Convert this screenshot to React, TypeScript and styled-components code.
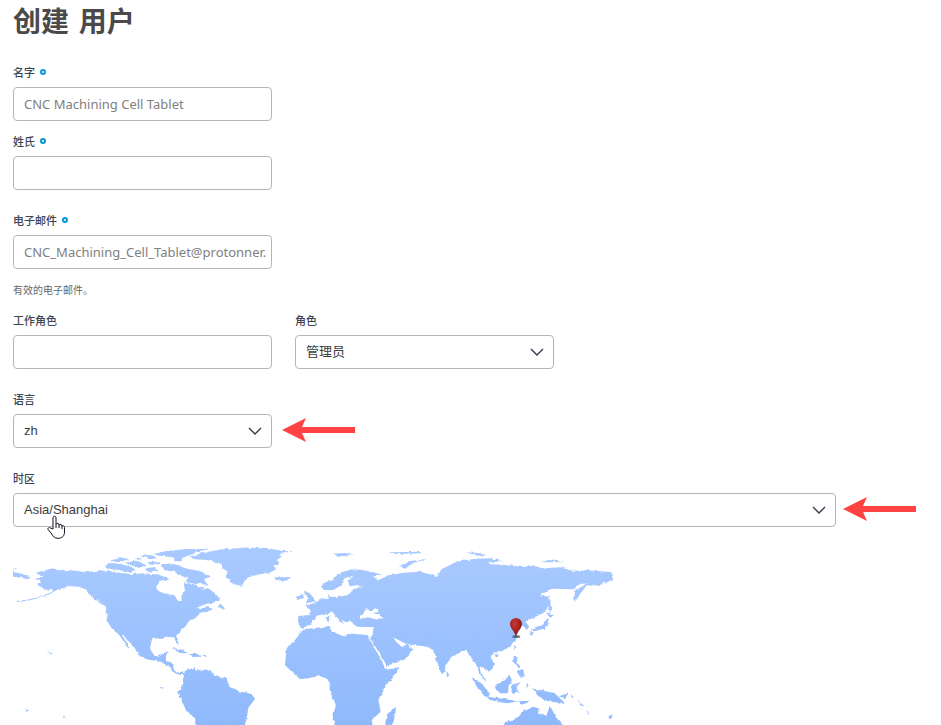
import React from "react";
import styled, { createGlobalStyle, css } from "styled-components";

const GlobalStyle = createGlobalStyle`
  *, *::before, *::after { box-sizing: border-box; }
  body {
    margin: 0;
    background: #fff;
    color: #3c3c3c;
    font-family: "Liberation Sans", "Noto Sans CJK SC", sans-serif;
  }
`;

const Page = styled.form`
  padding: 5px 25px 0 13px;
`;

const Title = styled.h1`
  margin: 0 0 22px;
  font: 700 28px/36px "DejaVu Sans", "Noto Sans CJK SC", sans-serif;
  color: #4a4a4a;
`;

const Row = styled.div<{ $gap?: number }>`
  display: flex;
  flex-wrap: wrap;
  gap: 23px;
  margin-bottom: ${(p) => p.$gap ?? 21}px;
`;

const Field = styled.div<{ $wide?: boolean }>`
  display: flex;
  flex-direction: column;
  gap: 6px;
  width: ${(p) => (p.$wide ? "100%" : "259px")};
  max-width: 100%;
`;

const Label = styled.label`
  display: flex;
  align-items: center;
  gap: 5px;
  font: 500 11px/18px "Noto Sans CJK SC", sans-serif;
  color: #3c4452;
`;

const Required = styled.span`
  width: 6px;
  height: 6px;
  border: 2px solid #0696d7;
  border-radius: 50%;
`;

const control = css`
  width: 100%;
  height: 34px;
  padding: 0 0 0 10px;
  border: 1px solid #b4b4be;
  border-radius: 4px;
  background: #fff;
  outline: none;
`;

const Input = styled.input`
  ${control}
  font: 400 13px/18px "Noto Sans", "Noto Sans CJK SC", sans-serif;
  color: #808080;
`;

const SelectBox = styled.div`
  display: grid;
  flex: 1;
  min-width: 0;
  align-items: center;

  > * { grid-area: 1 / 1; }
`;

const Select = styled.select`
  ${control}
  appearance: none;
  font: 13px/18px "Liberation Sans", "Noto Sans CJK SC", sans-serif;
  color: #3c3c3c;
  cursor: pointer;
`;

const Chevron = styled.svg`
  justify-self: end;
  width: 14px;
  height: 8px;
  margin-right: 10px;
  pointer-events: none;
`;

const Hint = styled.p`
  margin: 0 0 12px;
  font: 400 10px/18px "Noto Sans CJK SC", sans-serif;
  color: #666;
`;

const Pointed = styled.div`
  position: relative;
  display: flex;
  align-items: center;
  gap: 8px;
`;

const ArrowSlot = styled.svg<{ $outside?: boolean }>`
  flex: none;
  width: 72px;
  height: 24px;
  overflow: visible;
  ${(p) =>
    p.$outside &&
    css`
      position: absolute;
      left: 100%;
      margin-left: 11px;
    `}
`;

const Cursor = styled.svg`
  position: absolute;
  left: 34px;
  top: 22px;
  width: 18px;
  height: 24px;
  pointer-events: none;
`;

const Map = styled.svg`
  display: block;
  width: 600px;
  max-width: 100%;
  aspect-ratio: 600 / 180;
  margin-top: -3px;
`;

const Arrow = ({ outside }: { outside?: boolean }) => (
  <ArrowSlot $outside={outside} viewBox="0 0 72 24" aria-hidden="true">
    <path d="M-1 11 23 -1 19 8H72V14H19L23 23Z" fill="#ff4343" />
  </ArrowSlot>
);

type SelectFieldProps = { id: string; options: string[] };

const DropDown = ({ id, options }: SelectFieldProps) => (
  <SelectBox>
    <Select id={id} name={id} defaultValue={options[0]}>
      {options.map((o) => (
        <option key={o}>{o}</option>
      ))}
    </Select>
    <Chevron viewBox="0 0 14 8" fill="none" stroke="#303a4a" strokeWidth="1.4" aria-hidden="true">
      <path d="M1 1 7 7 13 1" />
    </Chevron>
  </SelectBox>
);

type TextFieldProps = { id: string; label: string; value?: string; type?: string; required?: boolean };

const TextField = ({ id, label, value = "", type = "text", required }: TextFieldProps) => (
  <Field>
    <Label htmlFor={id}>
      {label}
      {required && <Required />}
    </Label>
    <Input id={id} name={id} type={type} defaultValue={value} required={required} />
  </Field>
);

const WorldMap = () => (
  <Map viewBox="39 15 1800 540" role="img" aria-label="Asia/Shanghai">
    <defs>
      <linearGradient id="land" gradientUnits="userSpaceOnUse" x1="0" y1="20" x2="0" y2="555">
        <stop offset="0" stopColor="#a9caff" />
        <stop offset="1" stopColor="#8fb9fc" />
      </linearGradient>
      <radialGradient id="pin" cx="0.4" cy="0.3" r="0.7">
        <stop offset="0" stopColor="#c63b35" />
        <stop offset="1" stopColor="#8c100f" />
      </radialGradient>
      <filter id="coast" filterUnits="userSpaceOnUse" x="0" y="0" width="1880" height="600">
        <feTurbulence type="fractalNoise" baseFrequency="0.07" numOctaves="3" seed="4" />
        <feDisplacementMap in="SourceGraphic" scale="10" xChannelSelector="R" yChannelSelector="G" />
      </filter>
    </defs>
    <g filter="url(#coast)" fill="url(#land)">
      <g>
        <path d="M39 96 58 100 90 112 86 118 62 113 39 110ZM106 98 140 90 158 85 175 91 215 91 258 97 300 91 345 97 390 102 430 100 480 104 500 112 520 122 550 130 580 132 605 148 625 145 645 160 662 180 635 190 610 192 592 205 625 202 640 208 618 216 600 222 580 236 570 240 560 256 545 270 530 284 532 296 538 314 530 310 522 292 500 290 480 294 456 298 450 325 460 345 475 350 485 345 490 335 502 335 498 350 498 362 520 370 520 385 530 398 548 395 552 405 540 405 525 400 505 378 480 365 440 358 415 345 405 325 385 305 370 284 366 286 392 326 378 315 358 285 335 265 320 240 318 200 300 185 280 175 260 150 235 140 205 138 185 145 160 153 130 145 112 135 125 125 105 117 130 110Z" />
        <path d="M652 200 662 192 676 206 660 206ZM515 325 537 326 565 340 540 339ZM568 342 592 342 604 350 572 351ZM608 346 619 346 619 351 608 351ZM140 330 150 334 164 346 156 343ZM480 441 492 443 484 448ZM76 508 86 511 80 516ZM190 527 197 531 190 533ZM39 85 50 86 47 89Z" />
        <path d="M50 184 80 181 112 174 150 160 190 138M270 155 290 184 325 202" fill="none" stroke="#a4c5fe" strokeWidth="3" />
      </g>
      <g transform="translate(300)">
        <path d="M250 400 270 388 285 382 286 392 305 388 330 390 345 405 380 416 388 440 420 455 455 460 466 475 445 505 440 535 430 575 290 575 285 535 260 515 240 470 235 455 250 430 248 410Z" />
        <path d="M270 49 310 38 365 28 430 23 500 24 548 32 580 34 540 42 545 50 530 60 540 70 520 80 530 90 500 100 465 105 440 115 425 140 410 138 390 125 378 108 384 96 368 85 358 68 320 60 285 58Z" />
        <path d="M160 42 200 33 260 27 325 27 290 38 255 50 243 65 225 62 220 52 180 48ZM184 72 225 73 262 86 300 94 332 110 312 118 322 136 302 148 284 132 258 126 264 114 236 106 224 96 192 90ZM14 80 30 68 60 72 98 82 108 94 78 96 58 90 26 86ZM28 64 62 52 88 58 68 64ZM72 68 108 62 140 74 118 84 96 76ZM118 48 150 44 172 54 150 58ZM142 66 178 64 182 72 150 74ZM130 86 160 82 176 92 150 98ZM108 52 126 56 112 60Z" />
      </g>
      <g transform="translate(810)">
        <path d="M12 110 30 112 62 111 56 120 36 123 18 119ZM102 148 116 156 138 182 110 190 116 176 104 162ZM82 170 98 162 103 176 80 183ZM185 41 225 39 250 43 205 54ZM358 37 450 35 457 40 380 42ZM390 80 420 63 472 56 430 69 405 86Z" />
        <path d="M85 228 120 225 122 210 105 198 135 188 155 178 176 172 172 156 182 150 160 150 155 132 185 120 210 98 245 88 280 90 310 97 337 105 308 110 330 119 355 106 400 98 450 95 500 108 510 90 560 65 610 57 660 55 675 60 650 72 700 74 760 79 790 78 820 85 870 82 910 92 950 90 1028 97 1028 122 1010 125 980 138 950 136 932 160 915 186 910 176 912 155 950 130 925 135 910 148 845 146 810 166 835 170 838 195 815 222 780 238 768 245 778 262 768 268 755 252 746 262 742 290 725 318 690 335 675 340 660 346 675 370 670 385 655 395 635 380 628 376 632 400 650 422 644 425 628 400 620 375 605 355 588 330 565 340 545 350 528 375 524 396 515 402 500 360 490 330 470 320 410 312 385 300 370 290 378 305 395 320 412 312 430 328 405 358 350 378 335 350 300 295 308 285 310 262 262 260 240 245 226 246 214 238 222 252 208 244 188 216 165 225 142 226 130 240 120 255 95 264 83 250Z" />
        <path d="M97 268 130 265 180 258 185 275 225 290 235 280 290 285 300 300 325 345 348 389 386 382 375 405 345 440 325 480 332 515 305 540 310 575 200 575 188 530 198 495 180 455 178 425 155 408 90 418 65 395 45 375 50 325 80 295Z" />
        <path d="M352 522 378 503 372 540 355 570 345 550ZM530 394 538 405 530 413Z" />
        <path d="M171 228 178 228 177 246 171 244Z" />
      </g>
      <g transform="translate(1320)">
        <path d="M328 172 335 195 332 218 325 200ZM316 220 346 222 332 233ZM322 234 329 252 312 266 284 274 270 272 290 260 308 255ZM269 275 277 276 277 287 270 285ZM224 315 231 318 222 331ZM165 341 177 344 168 351ZM221 348 232 348 231 370 242 380 234 384 220 366ZM230 394 248 388 254 408 242 414ZM94 411 120 426 152 462 140 472 114 446ZM140 470 190 476 234 484 200 490 150 480ZM164 436 186 426 208 404 216 420 206 438 204 460 180 460 168 450ZM216 434 246 426 226 440 240 460 228 454 222 466 214 460ZM260 428 266 440 260 444ZM276 445 300 450 344 460 374 488 350 488 320 482 294 468ZM236 484 270 482 246 494ZM356 469 386 460 376 474ZM392 463 402 470 396 474ZM412 480 432 497 424 498ZM440 508 449 526 442 520ZM504 530 518 523 512 536ZM80 37 120 39 140 46 110 47ZM150 53 186 64 160 67ZM304 61 340 61 376 66 320 67Z" />
        <path d="M180 575 196 546 230 536 250 514 278 500 296 504 294 518 318 530 330 496 344 524 368 552 376 575Z" />
      </g>
      <g fill="#fff">
        <path d="M504 120 478 126 466 145 490 160 520 165 535 183 544 183 545 165 556 150 548 128 530 120 540 112 520 108Z" />
        <path d="M584 132 604 128 618 140 596 142Z" />
        <path d="M1080 228 1100 208 1114 214 1130 206 1136 216 1122 218 1150 233 1134 239 1104 232 1080 238Z" />
        <path d="M980 155 1000 150 1024 136 1034 114 1060 108 1044 124 1052 138 1090 139 1060 147 1046 165 1012 171 990 170Z" />
        <path d="M1296 92 1304 76 1312 100Z" />
      </g>
    </g>
    <ellipse cx="1549" cy="290" rx="12" ry="4" fill="#39424f" opacity="0.7" />
    <path d="M1548 290C1544 272 1530 266 1530 251A18 17 0 0 1 1566 251C1566 266 1552 272 1548 290Z" fill="url(#pin)" />
  </Map>
);

export default function App() {
  return (
    <>
      <GlobalStyle />
      <Page>
        <Title>创建 用户</Title>
        <Row $gap={11}>
          <TextField id="first-name" label="名字" value="CNC Machining Cell Tablet" required />
        </Row>
        <Row>
          <TextField id="last-name" label="姓氏" required />
        </Row>
        <Row $gap={12}>
          <TextField id="email" label="电子邮件" type="email" value="CNC_Machining_Cell_Tablet@protonner." required />
        </Row>
        <Hint>有效的电子邮件。</Hint>
        <Row>
          <TextField id="job-role" label="工作角色" />
          <Field>
            <Label htmlFor="role">角色</Label>
            <DropDown id="role" options={["管理员"]} />
          </Field>
        </Row>
        <Row>
          <Field>
            <Label htmlFor="language">语言</Label>
            <Pointed>
              <DropDown id="language" options={["zh"]} />
              <Arrow outside />
            </Pointed>
          </Field>
        </Row>
        <Row>
          <Field $wide>
            <Label htmlFor="timezone">时区</Label>
            <Pointed>
              <DropDown id="timezone" options={["Asia/Shanghai"]} />
              <Arrow />
              <Cursor viewBox="0 0 18 24" aria-hidden="true">
                <path
                  d="M6 14V3C6 .5 9 .5 9 3V9C10 8 12 8 12 10 13 9 15 9 15 11 16 10 17.500 11 17.500 12.500V17C17.500 21 15 23.300 11 23.300 7 23.300 6 21 4 18L1 14.500C.5 13 2 12 3.500 13Z"
                  fill="#fff"
                  stroke="#111122"
                />
                <path d="M9 9V13M12 10V13M15 11V14" stroke="#111122" fill="none" />
              </Cursor>
            </Pointed>
          </Field>
        </Row>
        <WorldMap />
      </Page>
    </>
  );
}
